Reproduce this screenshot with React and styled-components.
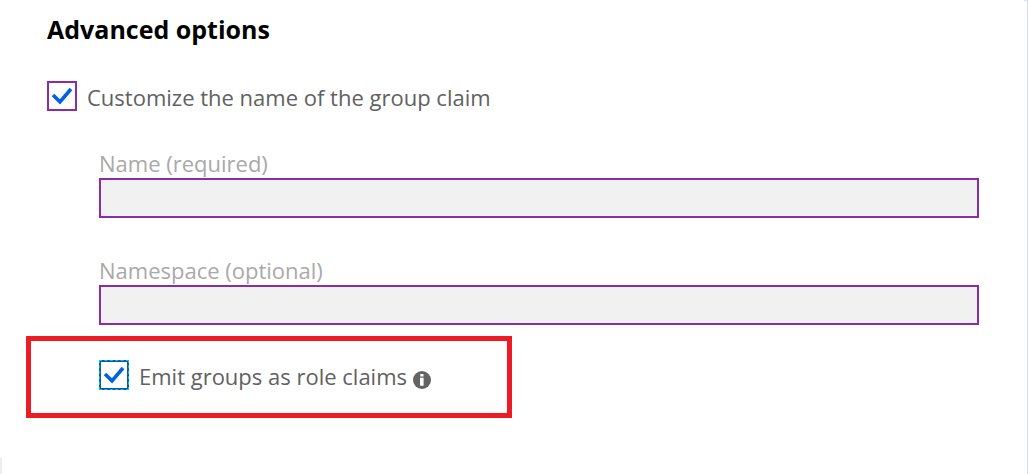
import React, { useState } from "react";
import styled, { createGlobalStyle, css } from "styled-components";

const GlobalStyle = createGlobalStyle`
  *, *::before, *::after { box-sizing: border-box; }
  body {
    margin: 0;
    background: #fff;
    color: #616161;
    font-family: "Segoe UI", "Open Sans", "Noto Sans", sans-serif;
    font-size: 22px;
    line-height: 28px;
  }
`;

const Panel = styled.main`
  display: flex;
  flex-direction: column;
  min-height: 100vh;
  border-right: 1px solid #d5dff0;
  background: linear-gradient(#d3e0f3, #d3e0f3) top right / 3px 1px no-repeat #fff;
`;

const Section = styled.section`
  padding: 12px 48px 0 47px;
`;

const Title = styled.h2`
  margin: 0 0 35px;
  color: #000;
  font-size: 25px;
  font-weight: 700;
  line-height: 34px;
`;

const CheckRow = styled.div`
  display: flex;
  align-items: center;
`;

const CheckFrame = styled.span`
  display: grid;
  flex: none;
  width: 30px;
  height: 30px;
  margin-right: 10px;
`;

const CheckLabel = styled.label`
  padding-top: 2px;
`;

const CheckInput = styled.input`
  grid-area: 1 / 1;
  width: 100%;
  height: 100%;
  margin: 0;
  appearance: none;
  background: #fff;
  border: 2px solid #8a2da5;
  border-radius: 0;
  ${({ $focused }) =>
    $focused &&
    css`
      border: 1px dashed #00c0f5;
      background:
        linear-gradient(#fff, #fff) padding-box,
        linear-gradient(#0b57a8, #0b57a8) border-box;
      outline: 1px solid #0b57a8;
      outline-offset: -2px;
    `}
`;

const CheckMark = styled.svg`
  grid-area: 1 / 1;
  width: 30px;
  height: 30px;
  pointer-events: none;
`;

const Fields = styled.div`
  display: grid;
  gap: 38px;
  margin: 38px 0 0 52px;
`;

const Field = styled.div`
  display: flex;
  flex-direction: column;
`;

const FieldLabel = styled.label`
  padding-bottom: 1px;
  color: #a9a9a9;
`;

const TextInput = styled.input`
  width: 100%;
  height: 40px;
  padding: 0 10px;
  border: 2px solid #8a2da5;
  border-radius: 0;
  background: #f1f1f1;
  font: inherit;
`;

const Highlight = styled.section`
  width: 486px;
  max-width: 100%;
  margin: 11px 0 0 26px;
  padding: 19px 16px 23px 68px;
  border: 5px solid #ed1c24;
`;

const InfoButton = styled.button`
  display: flex;
  margin: 10px 0 0 6px;
  padding: 0;
  border: 0;
  background: none;
  color: #636363;
`;

const LowerEdge = styled.div`
  height: 16px;
  margin-top: auto;
  border-left: 2px solid #eee;
`;

function Checkbox({ id, label, focused }) {
  const [checked, setChecked] = useState(true);
  return (
    <>
      <CheckFrame>
        <CheckInput
          id={id}
          type="checkbox"
          checked={checked}
          onChange={(e) => setChecked(e.target.checked)}
          $focused={focused}
        />
        {checked && (
          <CheckMark viewBox="0 0 30 30" aria-hidden="true">
            <path d="M6 14 13 20.8 24 8" fill="none" stroke="#0062e3" strokeWidth="3.6" />
          </CheckMark>
        )}
      </CheckFrame>
      <CheckLabel htmlFor={id}>{label}</CheckLabel>
    </>
  );
}

function TextField({ id, label }) {
  return (
    <Field>
      <FieldLabel htmlFor={id}>{label}</FieldLabel>
      <TextInput id={id} type="text" disabled />
    </Field>
  );
}

export default function App() {
  return (
    <>
      <GlobalStyle />
      <Panel>
        <Section>
          <Title>Advanced options</Title>
          <CheckRow>
            <Checkbox id="customize" label="Customize the name of the group claim" />
          </CheckRow>
          <Fields>
            <TextField id="name" label="Name (required)" />
            <TextField id="namespace" label="Namespace (optional)" />
          </Fields>
        </Section>
        <Highlight>
          <CheckRow>
            <Checkbox id="emit-roles" label="Emit groups as role claims" focused />
            <InfoButton type="button" aria-label="More information">
              <svg width="18" height="18" viewBox="0 0 18 18" aria-hidden="true">
                <circle cx="9" cy="9" r="9" fill="currentColor" />
                <path d="M7.3 3h3.2v2.5H7.3zM7 6.7h3.6v8H7z" fill="#fff" />
              </svg>
            </InfoButton>
          </CheckRow>
        </Highlight>
        <LowerEdge />
      </Panel>
    </>
  );
}
